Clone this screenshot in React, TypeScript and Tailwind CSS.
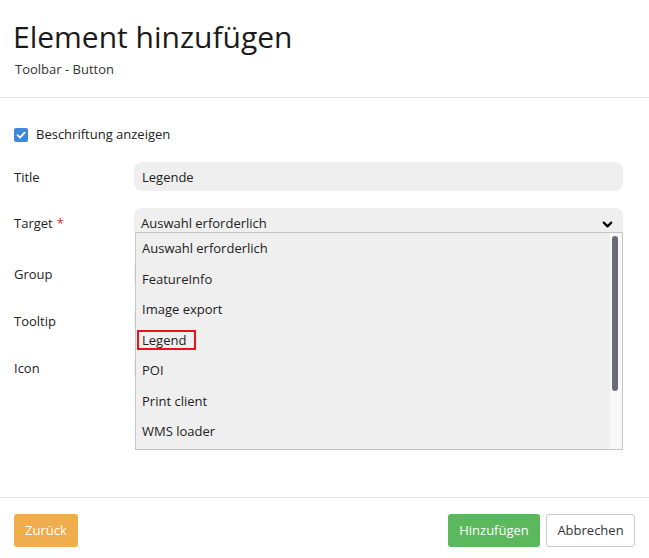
import React from 'react';
import { ChevronDown } from 'lucide-react';

const options = ['Auswahl erforderlich', 'FeatureInfo', 'Image export', 'Legend', 'POI', 'Print client', 'WMS loader'];

const Field: React.FC<{ label: string; required?: boolean; className?: string; children?: React.ReactNode }> = ({ label, required, className, children }) => (
  <div className={`flex items-center ${className ?? ''}`}>
    <div className="w-[120px] pt-[4px] text-[13px] text-[#222]">
      {label}
      {required && <span className="ml-[4px] text-[#c0392b]">*</span>}
    </div>
    <div className="relative flex-1">
      {children ?? <div className="h-[29px] rounded-[8px] bg-[#efefef]" />}
    </div>
  </div>
);

const App: React.FC = () => {
  return (
    <div className="flex h-[558px] w-full flex-col bg-white text-[#222]" style={{ fontFamily: '"Open Sans", sans-serif' }}>
      {/* header */}
      <div className="h-[98px] border-b border-[#e5e5e5] px-[13px] pt-[17px]">
        <h1 className="text-[30px] leading-[40px] text-[#1a1a1a]">Element hinzufügen</h1>
        <div className="mt-[3px] pl-[2px] text-[13px] text-[#333]">Toolbar - Button</div>
      </div>

      {/* body */}
      <div className="flex-1 pl-[14px] pr-[26px] pt-[27px]">
        <label className="flex items-center gap-[8px] text-[13px]">
          <span className="flex h-[14px] w-[14px] items-center justify-center rounded-[2px] bg-[#3f87d9]">
            <svg width="10" height="10" viewBox="0 0 10 10" fill="none">
              <path d="M1.5 5.2 L4 7.6 L8.6 2.6" stroke="white" strokeWidth="1.8" strokeLinecap="round" strokeLinejoin="round" />
            </svg>
          </span>
          Beschriftung anzeigen
        </label>

        <Field label="Title" className="mt-[17px]">
          <div className="flex h-[29px] items-center rounded-[8px] bg-[#efefef] px-[8px] pt-[3px] text-[13px]">Legende</div>
        </Field>

        <Field label="Target" required className="mt-[17px]">
          <div className="flex h-[29px] items-center justify-between rounded-[8px] bg-[#efefef] pl-[7px] pr-[8px] pt-[4px] text-[13px]">
            <span>Auswahl erforderlich</span>
            <ChevronDown size={15} strokeWidth={3.5} className="text-black" />
          </div>
          <div className="absolute left-[1px] right-0 top-[24px] z-10 flex h-[218px] border border-[#c5c5c5] bg-[#efefef]">
            <ul className="flex-1 pt-[1px] text-[13px]">
              {options.map(o => (
                <li key={o} className="relative flex h-[30.5px] items-center pl-[6px]">
                  {o === 'Legend' && <span className="absolute left-[1px] top-[5px] h-[20px] w-[59px] border-2 border-[#e8141a]" />}
                  {o}
                </li>
              ))}
            </ul>
            <div className="w-[12px] bg-[#f8f8f8] pl-[2px] pt-[3px]">
              <div className="h-[155px] w-[6px] rounded-[3px] bg-[#6b6c78]" />
            </div>
          </div>
        </Field>

        <Field label="Group" className="mt-[22px]" />
        <Field label="Tooltip" className="mt-[18px]" />
        <Field label="Icon" className="mt-[18px]" />
      </div>

      {/* footer */}
      <div className="flex h-[61px] items-start justify-between border-t border-[#e5e5e5] px-[14px] pt-[16px]">
        <button className="h-[33px] w-[64px] rounded-[3px] bg-[#f0ad4e] text-[13px] text-white">Zurück</button>
        <div className="flex gap-[6px]">
          <button className="h-[33px] w-[92px] rounded-[3px] bg-[#5cb85c] text-[13px] text-white">Hinzufügen</button>
          <button className="h-[33px] w-[89px] rounded-[3px] border border-[#cccccc] bg-white text-[13px] text-[#333]">Abbrechen</button>
        </div>
      </div>
    </div>
  );
};

export default App;
